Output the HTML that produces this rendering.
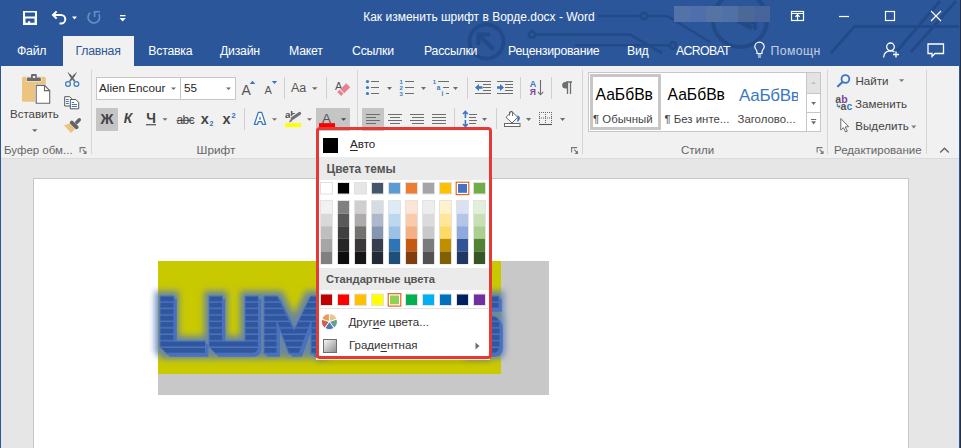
<!DOCTYPE html>
<html><head><meta charset="utf-8">
<style>
*{margin:0;padding:0;box-sizing:border-box}
html,body{width:961px;height:448px;overflow:hidden;background:#e6e6e6;font-family:"Liberation Sans",sans-serif}
.a{position:absolute}
.t{position:absolute;white-space:nowrap;line-height:1}
#title{left:0;top:0;width:961px;height:66px;background:#2b579a}
.tab{position:absolute;top:44.6px;font-size:12.3px;letter-spacing:-0.25px;color:#fff;white-space:nowrap;line-height:1}
#ribbon{left:0;top:66px;width:961px;height:93px;background:#f1f1f1;border-bottom:1px solid #dadbdc}
.sep{position:absolute;width:1px;background:#d5d5d5}
.glbl{position:absolute;top:145px;font-size:11.5px;color:#666;white-space:nowrap;line-height:1}
.dd{position:absolute;width:0;height:0;border-left:3px solid transparent;border-right:3px solid transparent;border-top:3px solid #666}
</style></head><body>
<!-- title bar -->
<div id="title" class="a"></div>

<div class="t" style="left:363.2px;top:11px;font-size:12px;color:#fff">Как изменить шрифт в Ворде.docx - Word</div>


<!-- title decorations -->
<svg class="a" style="left:0;top:0" width="961" height="66" viewBox="0 0 961 66">
 <g fill="none" stroke="#234a88" stroke-width="2.6">
  <circle cx="486.5" cy="41.5" r="17" stroke-width="3.8"/>
  <path d="M478.5 45 V34.5 H490" stroke-width="4.2"/>
  <path d="M480 36 L493.5 49.5" stroke-width="4.5"/>
  <circle cx="532" cy="34.6" r="3.2"/>
  <path d="M535.2 34.6 H630 L662 53"/>
  <path d="M575 45.3 H669.5"/>
  <circle cx="673" cy="45.3" r="3.2"/>
  <circle cx="644" cy="16" r="3.2"/>
  <path d="M598 16 H640.8 M647.2 16 H667 L710 42"/>
  <circle cx="740" cy="20" r="27" stroke-width="4"/>
  <path d="M715 8 L752 28" stroke-width="5"/>
  <path d="M748 22 H755 V30" stroke-width="4"/>
  <path d="M961 26.5 H854.5 L831 53 M940 1 L897 51 M956 1 L911 52" stroke-width="3"/>
 </g>
</svg>
<svg class="a" style="left:0;top:0" width="961" height="66" viewBox="0 0 961 66"><g fill="none" stroke="#fff" stroke-width="1.2">
  <path d="M757.8 55 H761.2 M758 57 H761"/>
  <path d="M757 53.5 V51.5 C757 50 754.8 48.8 754.8 46.8 A4.7 4.7 0 0 1 764.2 46.8 C764.2 48.8 762 50 762 51.5 V53.5 Z"/>
</g></svg>
<!-- blurred user -->
<div class="a" style="left:674px;top:6px;width:16px;height:16px;background:#5373a8"></div>
<div class="a" style="left:690px;top:6px;width:16px;height:16px;background:#4e6fab"></div>
<div class="a" style="left:706px;top:6px;width:16px;height:16px;background:#5574a4"></div>
<div class="a" style="left:722px;top:6px;width:16px;height:16px;background:#5071a6"></div>
<div class="a" style="left:738px;top:6px;width:16px;height:16px;background:#4b6897"></div>
<div class="a" style="left:754px;top:6px;width:16px;height:16px;background:#48659b"></div>
<!-- QAT icons -->
<svg class="a" style="left:0;top:0" width="140" height="36" viewBox="0 0 140 36">
 <path fill="#fff" fill-rule="evenodd" d="M23 11 H37 V25 H23 Z M25 12.5 V16.5 H35 V12.5 Z M25.5 18.5 V22.8 H28 V21.2 H30.2 V22.8 H34.5 V18.5 Z"/>
 <g fill="none" stroke="#fff" stroke-width="2">
  <path d="M53 15 H61 A4.3 4.3 0 0 1 61 23.6 H59.5"/>
  <path d="M56.6 11.4 L53 15 L56.6 18.6"/>
 </g>
 <path d="M72 16.5 H77 L74.5 19.5 Z" fill="#fff"/>
 <g fill="none" stroke="#6d8dc2" stroke-width="1.6">
  <path d="M90.3 12.6 A5.8 5.8 0 1 0 98.8 14.2"/>
  <path d="M94.6 17 V11.8 H100"/>
 </g>
 <rect x="120" y="15" width="5.5" height="1.3" fill="#fff"/>
 <path d="M119.5 18 H125.8 L122.65 21.5 Z" fill="#fff"/>
</svg>
<!-- window controls -->
<svg class="a" style="left:780px;top:0" width="181" height="66" viewBox="780 0 181 66">
 <g fill="none" stroke="#fff" stroke-width="1.2">
  <rect x="791.5" y="11.5" width="12" height="9"/>
  <path d="M792 13.5 H803 M797.5 14 V20.5 M795.3 16.8 L797.5 14.6 L799.7 16.8"/>
  <path d="M839 16.5 H849"/>
  <rect x="885.5" y="11.5" width="9" height="9"/>
  <path d="M931 11 L941 21 M941 11 L931 21"/>
 </g>
 <g fill="none" stroke="#fff" stroke-width="1.3">
  <circle cx="890.5" cy="46.8" r="3.8"/>
  <path d="M883.5 57.5 C884 52.5 887 50.8 890.5 50.8 C892 50.8 893.5 51.2 894.5 52"/>
  <path d="M896 51.5 V57.5 M893 54.5 H899"/>
  <path d="M928 44 H943.5 V53.5 H935 L932 56.5 V53.5 H928 Z"/>
 </g>
</svg>

<!-- tabs -->
<div class="tab" style="left:17px">Файл</div>
<div class="a" style="left:63px;top:36px;width:71px;height:31px;background:#f1f1f1"></div>
<div class="tab" style="left:75.5px;color:#2b579a">Главная</div>
<div class="tab" style="left:148.3px">Вставка</div>
<div class="tab" style="left:220px">Дизайн</div>
<div class="tab" style="left:289px">Макет</div>
<div class="tab" style="left:352px">Ссылки</div>
<div class="tab" style="left:424px">Рассылки</div>
<div class="tab" style="left:508px">Рецензирование</div>
<div class="tab" style="left:627px">Вид</div>
<div class="tab" style="left:676px;letter-spacing:-0.65px">ACROBAT</div>
<div class="tab" style="left:770.5px;color:#c3cfe4;font-size:12.3px;letter-spacing:0.4px">Помощн</div>

<!-- ribbon -->
<div id="ribbon" class="a"></div>
<div class="glbl" style="left:4px">Буфер обм...</div>
<div class="glbl" style="left:196.6px;top:144.6px;font-size:11.8px">Шрифт</div>
<div class="glbl" style="left:681px">Стили</div>
<div class="glbl" style="left:834px">Редактирование</div>
<div class="sep" style="left:91px;top:70px;height:84px"></div>
<div class="sep" style="left:582px;top:70px;height:84px"></div>
<div class="sep" style="left:827px;top:70px;height:84px"></div>
<div class="sep" style="left:926px;top:70px;height:84px"></div>


<!-- clipboard group -->
<svg class="a" style="left:0;top:66px" width="92" height="92" viewBox="0 66 92 92">
 <rect x="22" y="76.8" width="23.8" height="25" rx="1.5" fill="#ecc47f"/>
 <path d="M26.2 81.5 V78 Q26.2 77 27.2 77 H30.4 V74.6 Q30.4 73.5 31.5 73.5 H36.3 Q37.4 73.5 37.4 74.6 V77 H40.5 Q41.5 77 41.5 78 V81.5 Z" fill="#f2f2f2"/>
 <path d="M26.8 80.9 V78.6 Q26.8 77.6 27.8 77.6 H31 V75.2 Q31 74.1 32.1 74.1 H35.7 Q36.8 74.1 36.8 75.2 V77.6 H39.9 Q40.9 77.6 40.9 78.6 V80.9 Z" fill="#6b6b6b"/>
 <rect x="32.9" y="76" width="2.3" height="2" fill="#f2f2f2"/>
 <path d="M35 84.2 H44.8 L51 90.2 V104.5 H35 Z" fill="#f2f2f2"/>
 <path d="M36.2 85.4 H44.5 L49.7 90.6 V103.3 H36.2 Z" fill="#fff" stroke="#666" stroke-width="1.1"/>
 <path d="M44.5 85.4 V90.6 H49.7" fill="none" stroke="#666" stroke-width="1.1"/>
 <path d="M32 129.2 H37.5 L34.75 132 Z" fill="#6d6d6d"/>
 <!-- scissors -->
 <path d="M67.6 72.5 L71.4 78.5 L73 78.5 L76.9 72.5 L76.2 72.3 L72.2 77.2 L68.3 72.3 Z" fill="#666"/>
 <path d="M69.6 74.5 L74.6 81.2 M74.8 74.5 L69.8 81.2" stroke="#666" stroke-width="1.8"/>
 <g fill="none" stroke="#3d78c3" stroke-width="1.2"><circle cx="68" cy="84" r="2.4"/><circle cx="76.4" cy="84" r="2.4"/></g>
 <!-- copy -->
 <g fill="#fff" stroke="#555" stroke-width="1">
  <path d="M64.7 96.7 H69.7 L71.7 98.7 V106 H64.7 Z"/>
  <path d="M70.3 99.5 H75.8 L78.7 102.4 V108.8 H70.3 Z"/>
 </g>
 <g stroke="#3d78c3" stroke-width="1"><path d="M66 99.5 H68.8 M66 101.5 H68.8 M66 103.5 H68.8 M71.8 102.5 H74.2 M71.8 104.5 H77 M71.8 106.5 H77"/></g>
 <!-- format painter -->
 <path d="M64 125.3 L69.5 123.5 L75 129 L71 133 Z" fill="#ecc47f"/>
 <path d="M71.8 122.6 L76.6 127.2" stroke="#646464" stroke-width="4" stroke-linecap="round"/>
 <path d="M76.8 122.2 L79.3 119.7" stroke="#646464" stroke-width="3.4" stroke-linecap="round"/>
</svg>
<div class="t" style="left:10px;top:109px;font-size:11.5px;color:#444">Вставить</div>


<!-- font group -->
<div class="a" style="left:96px;top:77px;width:85px;height:23px;background:#fff;border:1px solid #c6c6c6"></div>
<div class="a" style="left:180px;top:77px;width:56px;height:23px;background:#fff;border:1px solid #c6c6c6"></div>
<div class="t" style="left:99px;top:81.8px;font-size:11.7px;color:#262626">Alien Encour</div>
<div class="t" style="left:184px;top:81.8px;font-size:11.7px;color:#262626">55</div>
<div class="a" style="left:96px;top:108px;width:22px;height:23px;background:#c5c5c5"></div>
<div class="a" style="left:316px;top:108px;width:34px;height:23px;background:#c5c5c5"></div>
<div class="t" style="left:100.5px;top:111.8px;font-size:14.3px;font-weight:bold;color:#444">Ж</div>
<div class="t" style="left:123.8px;top:111.8px;font-size:13.8px;font-weight:bold;font-style:italic;color:#444">К</div>
<div class="t" style="left:146.2px;top:111.8px;font-size:13.8px;font-weight:bold;color:#444">Ч</div>
<div class="t" style="left:176.5px;top:113.5px;font-size:12px;color:#444;letter-spacing:-0.6px">abc</div>
<div class="t" style="left:200.8px;top:111.5px;font-size:14.5px;font-weight:bold;color:#444">x</div>
<div class="t" style="left:209.5px;top:119.5px;font-size:7px;font-weight:bold;color:#2e6fbd">2</div>
<div class="t" style="left:222.6px;top:111.5px;font-size:14.5px;font-weight:bold;color:#444">x</div>
<div class="t" style="left:231.5px;top:112px;font-size:7.5px;font-weight:bold;color:#2e6fbd">2</div>
<div class="t" style="left:241.5px;top:83px;font-size:14px;color:#555">A</div>
<div class="t" style="left:264.5px;top:85px;font-size:11px;color:#555">A</div>
<div class="t" style="left:291px;top:82px;font-size:12.5px;color:#555">Aa</div>
<div class="t" style="left:335px;top:80.5px;font-size:11px;color:#555">A</div>
<div class="t" style="left:285px;top:109.8px;font-size:9.8px;font-weight:bold;color:#4a4a4a;letter-spacing:-0.3px">ab</div>
<div class="t" style="left:322px;top:112px;font-size:13.5px;color:#555">A</div>
<svg class="a" style="left:92px;top:66px" width="270" height="92" viewBox="92 66 270 92">
 <g fill="#6d6d6d">
  <path d="M171 87.5 H176 L173.5 90 Z"/>
  <path d="M226 87.5 H231 L228.5 90 Z"/>
  <path d="M312 87.2 H317.5 L314.75 90 Z"/>
  <path d="M162.5 118.2 H167.5 L165 120.8 Z"/>
  <path d="M272 118.2 H277 L274.5 120.8 Z"/>
  <path d="M307 118.2 H312 L309.5 120.8 Z"/>
  <path d="M341 118.2 H346.2 L343.6 120.8 Z" fill="#444"/>
 </g>
 <rect x="146" y="124.2" width="10" height="1.1" fill="#444"/>
 <rect x="176.5" y="119.8" width="17" height="1" fill="#444"/>
 <path d="M249.7 84 L252.5 80.7 L255.3 84 Z" fill="#3a78c2"/>
 <path d="M271.8 80.9 H277.2 L274.5 84 Z" fill="#3a78c2"/>
 <g class="sep"></g>
 <rect x="284" y="77" width="1" height="22" fill="#d0d0d0"/>
 <rect x="326" y="77" width="1" height="22" fill="#d0d0d0"/>
 <rect x="244" y="108" width="1" height="22" fill="#d0d0d0"/>
 <!-- eraser -->
 <path d="M340.6 89.2 L346.2 83.3 L350.2 87.3 L344.3 93.2 Z" fill="#e8808f"/>
 <path d="M337.2 92 L339.6 89.7 L343.5 93.6 L341.2 95.9 Z" fill="#e8808f"/>
 <!-- text effects A -->
 <path d="M254.4 124.3 L258.3 112.4 H261.7 L265.6 124.3 H262.5 L261.6 121.6 H258.4 L257.5 124.3 Z" fill="#fff" stroke="#3a78c2" stroke-width="1.3" stroke-linejoin="round"/>
 <path d="M258.9 119.5 H261.1 L260 115.8 Z" fill="#3a78c2"/>
 <!-- highlighter pen -->
 <path d="M292.2 118.6 L299.6 113.4" stroke="#f1f1f1" stroke-width="5" stroke-linecap="round"/>
 <path d="M292.2 118.6 L299.6 113.4" stroke="#707070" stroke-width="3.1" stroke-linecap="round"/>
 <path d="M288.7 122.4 L290.6 119.2 L292.6 121 Z" fill="#707070"/>
 <rect x="285" y="123.1" width="16" height="4" fill="#ffff00"/>
 <rect x="319" y="123.1" width="16" height="4" fill="#ff0000"/>
</svg>
<div class="sep" style="left:357px;top:70px;height:84px"></div>


<!-- paragraph group -->
<div class="a" style="left:362px;top:108px;width:22px;height:23px;background:#c5c5c5"></div>
<svg class="a" style="left:358px;top:66px" width="230" height="92" viewBox="358 66 230 92">
 <g fill="#6d6d6d">
  <path d="M387 87 H392 L389.5 90 Z"/>
  <path d="M421 87 H426 L423.5 90 Z"/>
  <path d="M453 87 H458 L455.5 90 Z"/>
  <path d="M482 118 H487 L484.5 121 Z"/>
  <path d="M526 118 H531.2 L528.6 121 Z"/>
  <path d="M560 118 H565.2 L562.6 121 Z"/>
 </g>
 <g fill="#d0d0d0">
  <rect x="467" y="77" width="1" height="22"/>
  <rect x="520" y="77" width="1" height="22"/>
  <rect x="551" y="77" width="1" height="22"/>
  <rect x="454" y="108" width="1" height="21"/>
  <rect x="496" y="108" width="1" height="21"/>
 </g>
 <!-- bullets -->
 <g fill="#3a78c2"><circle cx="367.5" cy="81.5" r="1.6"/><circle cx="367.5" cy="87.5" r="1.6"/><circle cx="367.5" cy="93.5" r="1.6"/></g>
 <g stroke="#6d6d6d" stroke-width="1.1">
  <path d="M371 81.5 H379 M371 87.5 H379 M371 93.5 H379"/>
  <path d="M405 81.5 H414 M405 87.5 H414 M405 93.5 H414"/>
  <path d="M438 81.5 H449 M443 87.5 H449 M446 93.5 H449"/>
  <path d="M475 81.5 H491 M483 84.5 H491 M483 87.5 H491 M483 90.5 H491 M475 93.5 H491"/>
  <path d="M497 81.5 H513 M505 84.5 H513 M505 87.5 H513 M505 90.5 H513 M497 93.5 H513"/>
  <path d="M366 114.5 H380 M366 117.5 H376 M366 120.5 H380 M366 123.5 H376"/>
  <path d="M388 114.5 H402 M390 117.5 H400 M388 120.5 H402 M390 123.5 H400"/>
  <path d="M410 114.5 H424 M412 117.5 H424 M410 120.5 H424 M412 123.5 H424"/>
  <path d="M432 114.5 H446 M432 117.5 H446 M432 120.5 H446 M432 123.5 H446"/>
  <path d="M469 114.5 H477 M469 117.5 H476 M469 120.5 H477 M469 123.5 H476"/>
 </g>
 <g font-family="Liberation Sans" font-weight="bold" fill="#3a78c2">
  <text x="399.6" y="83.9" font-size="6">1</text>
  <text x="399.6" y="89.9" font-size="6">2</text>
  <text x="399.6" y="95.9" font-size="6">3</text>
  <text x="432.8" y="83.9" font-size="6">1</text>
  <text x="436.8" y="89.6" font-size="6.5">a</text>
  <text x="441.6" y="96" font-size="6.5">i</text>
 </g>
 <!-- indent arrows -->
 <path d="M475 87.5 L479 84 V86.2 H482.5 V88.8 H479 V91 Z" fill="#3a78c2"/>
 <path d="M504 87.5 L500 84 V86.2 H497 V88.8 H500 V91 Z" fill="#3a78c2"/>
 <!-- sort -->
 <text x="529.7" y="86.7" font-family="Liberation Sans" font-weight="bold" font-size="9" fill="#3a78c2">A</text>
 <text x="529.8" y="94.9" font-family="Liberation Sans" font-weight="bold" font-size="8.5" fill="#7b3fa0">Я</text>
 <path d="M540.5 80 V94.5 M537.8 91.8 L540.5 94.8 L543.2 91.8" fill="none" stroke="#6d6d6d" stroke-width="1.1"/>
 <!-- pilcrow -->
 <path d="M566 82 H572 M567.5 82 V94 M570.5 82 V94" stroke="#6d6d6d" stroke-width="1.3" fill="none"/>
 <path d="M567.5 82 H565.5 A3.3 3.3 0 0 0 565.5 88.6 H567.5 Z" fill="#6d6d6d"/>
 <!-- line spacing arrows -->
 <path d="M465.4 112 V118 M463 114 L465.4 111.5 L467.8 114 M465.4 120 V126 M463 124 L465.4 126.5 L467.8 124" fill="none" stroke="#3a78c2" stroke-width="1.6"/>
 <!-- shading -->
 <path d="M506 117.3 L511.8 111.5 L517.8 117.3 L512 123 Z" fill="#fff" stroke="#666" stroke-width="1"/>
 <path d="M509.5 115.5 V112 Q511 110.6 512.6 112 V116" fill="none" stroke="#666" stroke-width="1"/>
 <path d="M517.3 115.2 Q520.5 116.5 519.8 119 Q519 121.5 517 121.8 Q517.8 118.5 517.3 115.2 Z" fill="#3a78c2"/>
 <rect x="504.5" y="123.5" width="15.5" height="3" fill="#fff" stroke="#666" stroke-width="1"/>
 <!-- borders -->
 <g fill="none" stroke="#666" stroke-width="1" stroke-dasharray="1 1">
  <path d="M539 112.5 H552 M539 118 H552 M539.5 112 V123 M545.5 112 V123 M551.5 112 V123"/>
 </g>
 <path d="M539 124.5 H552" stroke="#555" stroke-width="1.1"/>
</svg>


<!-- launchers -->
<svg class="a" style="left:0;top:140px" width="961" height="18" viewBox="0 140 961 18">
 <g id="ln">
 <path d="M571.6 152.6 V147.6 H577" fill="none" stroke="#777" stroke-width="1.1"/>
 <path d="M574.2 149.6 L577.6 153" stroke="#777" stroke-width="1.1"/>
 <path d="M578 150.4 V154 H574.4 Z" fill="#777"/>
 </g>
 <use href="#ln" x="-491.5"/>
 <use href="#ln" x="245.5"/>
</svg>


<!-- styles gallery -->
<div class="a" style="left:588px;top:72px;width:233px;height:60px;background:#fff;border:1px solid #c6c6c6"></div>
<div class="a" style="left:590px;top:74px;width:71px;height:56px;border:3px solid #c6c6c6"></div>
<div class="a" style="left:806px;top:72px;width:15px;height:60px;border:1px solid #c6c6c6;background:#fff"></div>
<div class="a" style="left:807px;top:73px;width:13px;height:20px;background:#e3e3e3"></div>
<div class="a" style="left:806px;top:93px;width:15px;height:1px;background:#c6c6c6"></div>
<div class="a" style="left:806px;top:112px;width:15px;height:1px;background:#c6c6c6"></div>
<div class="t" style="left:595.5px;top:87px;font-size:15.7px;color:#000">АаБбВв</div>
<div class="t" style="left:667.5px;top:87px;font-size:15.7px;color:#000">АаБбВв</div>
<div class="a" style="left:737px;top:80px;width:61px;height:26px;overflow:hidden"><div class="t" style="left:2px;top:7px;font-size:17px;color:#3a78c2;letter-spacing:-0.3px">АаБбВв</div></div>
<div class="t" style="left:593px;top:113.5px;font-size:11.4px;color:#444">¶ Обычный</div>
<div class="t" style="left:664.5px;top:113.5px;font-size:11.4px;color:#444">¶ Без инте...</div>
<div class="t" style="left:737.5px;top:113.5px;font-size:11.4px;color:#444">Заголово...</div>
<svg class="a" style="left:800px;top:66px" width="130" height="92" viewBox="800 66 130 92">
 <path d="M811.2 84 L813.6 81.3 L816 84 Z" fill="#c2c2c2"/>
 <path d="M811.2 102 H816 L813.6 105 Z" fill="#6d6d6d"/>
 <rect x="811" y="119" width="5.2" height="1" fill="#6d6d6d"/>
 <path d="M811.2 121.3 H816 L813.6 124.6 Z" fill="#6d6d6d"/>
 <!-- find -->
 <circle cx="845.4" cy="79" r="3.9" fill="none" stroke="#3a78c2" stroke-width="1.8"/>
 <path d="M842.5 82 L838 86.2" stroke="#3a78c2" stroke-width="2.2" stroke-linecap="round"/>
 <path d="M899 79.3 H904.2 L901.6 82 Z" fill="#7a7a7a"/>
 <path d="M911.2 125.6 H916.3 L913.75 128.5 Z" fill="#7a7a7a"/>
 <!-- replace -->
 <text x="835.3" y="102.8" font-family="Liberation Sans" font-size="10.5" font-weight="bold" fill="#555">a</text>
 <text x="841.2" y="102.8" font-family="Liberation Sans" font-size="10.5" font-weight="bold" fill="#7b3fa0">b</text>
 <text x="840.6" y="110" font-family="Liberation Sans" font-size="10.5" font-weight="bold" fill="#555">a</text>
 <text x="846.4" y="110" font-family="Liberation Sans" font-size="10.5" font-weight="bold" fill="#3a78c2">c</text>
 <path d="M837.3 103.5 V106.5 H840 M838.6 105.2 L840.2 106.5 L838.6 107.8" fill="none" stroke="#3a78c2" stroke-width="1"/>
 <!-- select cursor -->
 <path d="M840.8 118.5 V130 L843.4 127.6 L845.6 132 L847.3 131.2 L845.2 126.9 L848.7 126.7 Z" fill="#fff" stroke="#6d6d6d" stroke-width="1" stroke-linejoin="round"/>
</svg>
<div class="t" style="left:855.5px;top:74.8px;font-size:11.6px;color:#444">Найти</div>
<div class="t" style="left:855px;top:98.2px;font-size:11.6px;color:#444">Заменить</div>
<div class="t" style="left:855.3px;top:120.2px;font-size:11.6px;color:#444">Выделить</div>
<!-- collapse ribbon -->
<svg class="a" style="left:936px;top:144px" width="16" height="12" viewBox="936 144 16 12"><path d="M940.2 152.6 L944.5 148.3 L948.8 152.6" fill="none" stroke="#666" stroke-width="1.4"/></svg>

<!-- page -->
<div class="a" style="left:33px;top:178px;width:876px;height:280px;background:#fff;border:1px solid #c6c6c6"></div>
<div class="a" style="left:158px;top:261px;width:391px;height:134px;background:#c8c8c8"></div>
<div class="a" style="left:158px;top:261px;width:343px;height:113px;background:#c9c900"></div>


<!-- LUMPICS -->
<svg class="a" style="left:140px;top:270px" width="400" height="110" viewBox="140 270 400 110">
 <defs>
  <pattern id="stripes" x="0" y="296.3" width="10" height="6.45" patternUnits="userSpaceOnUse">
   <rect width="10" height="6.45" fill="#30579d"/>
   <rect y="5.05" width="10" height="1.4" fill="#4d75c0"/>
  </pattern>
  <filter id="glow" x="-20%" y="-40%" width="140%" height="180%">
   <feMorphology operator="dilate" radius="4.5" in="SourceAlpha" result="d"/>
   <feGaussianBlur in="d" stdDeviation="3" result="b"/>
   <feFlood flood-color="#5a7bb8" flood-opacity="0.85"/>
   <feComposite in2="b" operator="in"/>
  </filter>
  <g id="lt">
   <path d="M160 296 H174 V341 H205.5 V354 H167 L160 347 Z"/>
   <path d="M209 296 H222.5 V341 H245 V296 H258.5 V346 Q258.5 354 250.5 354 H216 L209 347 Z"/>
   <path d="M264 296 H277.5 L294 330 L310.5 296 H324 V354 H311 V322 L299 354 H289 L277 322 V354 H264 Z"/>
   <path d="M470 296 H499 V309 H486 V316 H491 Q500 316 500 325 V345 Q500 354 491 354 H470 Z"/>
  </g>
 </defs>
 <use href="#lt" filter="url(#glow)"/>
 <use href="#lt" x="2.8" y="2.8" fill="#4a70c0"/>
 <use href="#lt" fill="url(#stripes)" stroke="#4a72c0" stroke-width="1"/>
</svg>

<!-- menu -->
<div class="a" style="left:319px;top:131px;width:170px;height:226px;background:#fff"></div>
<div class="a" style="left:319px;top:157px;width:170px;height:23px;background:#ebebeb"></div>
<div class="a" style="left:319px;top:268px;width:170px;height:22px;background:#ebebeb"></div>
<div class="a" style="left:323px;top:138px;width:14.5px;height:14.5px;background:#000"></div>
<div class="t" style="left:350px;top:137.9px;font-size:11.6px;color:#262626"><u style="text-decoration-thickness:1px;text-underline-offset:2px">А</u>вто</div>
<div class="t" style="left:326.5px;top:163.8px;font-size:11.9px;font-weight:bold;color:#555">Цвета темы</div>
<div class="t" style="left:326px;top:274px;font-size:11.2px;font-weight:bold;color:#555">Стандартные цвета</div>
<svg class="a" style="left:316px;top:127px" width="176" height="233" viewBox="316 127 176 233">
 <rect x="320.5" y="182.5" width="12" height="11.5" fill="#FFFFFF" stroke="#e0e0e0" stroke-width="1"/>
 <rect x="337.5" y="182.5" width="12" height="11.5" fill="#000000" stroke="#e0e0e0" stroke-width="1"/>
 <rect x="354.5" y="182.5" width="12" height="11.5" fill="#E7E6E6" stroke="#e0e0e0" stroke-width="1"/>
 <rect x="371.5" y="182.5" width="12" height="11.5" fill="#44546A" stroke="#e0e0e0" stroke-width="1"/>
 <rect x="388.5" y="182.5" width="12" height="11.5" fill="#5B9BD5" stroke="#e0e0e0" stroke-width="1"/>
 <rect x="405.5" y="182.5" width="12" height="11.5" fill="#ED7D31" stroke="#e0e0e0" stroke-width="1"/>
 <rect x="422.5" y="182.5" width="12" height="11.5" fill="#A5A5A5" stroke="#e0e0e0" stroke-width="1"/>
 <rect x="439.5" y="182.5" width="12" height="11.5" fill="#FFC000" stroke="#e0e0e0" stroke-width="1"/>
 <rect x="456.5" y="182.5" width="12" height="11.5" fill="#4472C4" stroke="#e0e0e0" stroke-width="1"/>
 <rect x="473.5" y="182.5" width="12" height="11.5" fill="#70AD47" stroke="#e0e0e0" stroke-width="1"/>
 <rect x="320.5" y="200.5" width="12" height="63.5" fill="none" stroke="#e3e3e3" stroke-width="1"/>
 <rect x="321.0" y="201.0" width="11" height="12.6" fill="#F2F2F2"/>
 <rect x="321.0" y="213.6" width="11" height="12.6" fill="#D9D9D9"/>
 <rect x="321.0" y="226.2" width="11" height="12.6" fill="#BFBFBF"/>
 <rect x="321.0" y="238.8" width="11" height="12.6" fill="#A6A6A6"/>
 <rect x="321.0" y="251.4" width="11" height="12.6" fill="#808080"/>
 <rect x="337.5" y="200.5" width="12" height="63.5" fill="none" stroke="#e3e3e3" stroke-width="1"/>
 <rect x="338.0" y="201.0" width="11" height="12.6" fill="#808080"/>
 <rect x="338.0" y="213.6" width="11" height="12.6" fill="#595959"/>
 <rect x="338.0" y="226.2" width="11" height="12.6" fill="#404040"/>
 <rect x="338.0" y="238.8" width="11" height="12.6" fill="#262626"/>
 <rect x="338.0" y="251.4" width="11" height="12.6" fill="#0D0D0D"/>
 <rect x="354.5" y="200.5" width="12" height="63.5" fill="none" stroke="#e3e3e3" stroke-width="1"/>
 <rect x="355.0" y="201.0" width="11" height="12.6" fill="#D0CECE"/>
 <rect x="355.0" y="213.6" width="11" height="12.6" fill="#AEABAB"/>
 <rect x="355.0" y="226.2" width="11" height="12.6" fill="#757171"/>
 <rect x="355.0" y="238.8" width="11" height="12.6" fill="#3A3838"/>
 <rect x="355.0" y="251.4" width="11" height="12.6" fill="#171616"/>
 <rect x="371.5" y="200.5" width="12" height="63.5" fill="none" stroke="#e3e3e3" stroke-width="1"/>
 <rect x="372.0" y="201.0" width="11" height="12.6" fill="#D6DCE4"/>
 <rect x="372.0" y="213.6" width="11" height="12.6" fill="#ADB9CA"/>
 <rect x="372.0" y="226.2" width="11" height="12.6" fill="#8496B0"/>
 <rect x="372.0" y="238.8" width="11" height="12.6" fill="#333F4F"/>
 <rect x="372.0" y="251.4" width="11" height="12.6" fill="#222A35"/>
 <rect x="388.5" y="200.5" width="12" height="63.5" fill="none" stroke="#e3e3e3" stroke-width="1"/>
 <rect x="389.0" y="201.0" width="11" height="12.6" fill="#DDEBF7"/>
 <rect x="389.0" y="213.6" width="11" height="12.6" fill="#BDD7EE"/>
 <rect x="389.0" y="226.2" width="11" height="12.6" fill="#9BC2E6"/>
 <rect x="389.0" y="238.8" width="11" height="12.6" fill="#2F75B5"/>
 <rect x="389.0" y="251.4" width="11" height="12.6" fill="#1F4E78"/>
 <rect x="405.5" y="200.5" width="12" height="63.5" fill="none" stroke="#e3e3e3" stroke-width="1"/>
 <rect x="406.0" y="201.0" width="11" height="12.6" fill="#FCE4D6"/>
 <rect x="406.0" y="213.6" width="11" height="12.6" fill="#F8CBAD"/>
 <rect x="406.0" y="226.2" width="11" height="12.6" fill="#F4B084"/>
 <rect x="406.0" y="238.8" width="11" height="12.6" fill="#C65911"/>
 <rect x="406.0" y="251.4" width="11" height="12.6" fill="#833C0C"/>
 <rect x="422.5" y="200.5" width="12" height="63.5" fill="none" stroke="#e3e3e3" stroke-width="1"/>
 <rect x="423.0" y="201.0" width="11" height="12.6" fill="#EDEDED"/>
 <rect x="423.0" y="213.6" width="11" height="12.6" fill="#DBDBDB"/>
 <rect x="423.0" y="226.2" width="11" height="12.6" fill="#C9C9C9"/>
 <rect x="423.0" y="238.8" width="11" height="12.6" fill="#7B7B7B"/>
 <rect x="423.0" y="251.4" width="11" height="12.6" fill="#525252"/>
 <rect x="439.5" y="200.5" width="12" height="63.5" fill="none" stroke="#e3e3e3" stroke-width="1"/>
 <rect x="440.0" y="201.0" width="11" height="12.6" fill="#FFF2CC"/>
 <rect x="440.0" y="213.6" width="11" height="12.6" fill="#FFE699"/>
 <rect x="440.0" y="226.2" width="11" height="12.6" fill="#FFD966"/>
 <rect x="440.0" y="238.8" width="11" height="12.6" fill="#BF8F00"/>
 <rect x="440.0" y="251.4" width="11" height="12.6" fill="#806000"/>
 <rect x="456.5" y="200.5" width="12" height="63.5" fill="none" stroke="#e3e3e3" stroke-width="1"/>
 <rect x="457.0" y="201.0" width="11" height="12.6" fill="#D9E1F2"/>
 <rect x="457.0" y="213.6" width="11" height="12.6" fill="#B4C6E7"/>
 <rect x="457.0" y="226.2" width="11" height="12.6" fill="#8EA9DB"/>
 <rect x="457.0" y="238.8" width="11" height="12.6" fill="#305496"/>
 <rect x="457.0" y="251.4" width="11" height="12.6" fill="#203764"/>
 <rect x="473.5" y="200.5" width="12" height="63.5" fill="none" stroke="#e3e3e3" stroke-width="1"/>
 <rect x="474.0" y="201.0" width="11" height="12.6" fill="#E2EFDA"/>
 <rect x="474.0" y="213.6" width="11" height="12.6" fill="#C6E0B4"/>
 <rect x="474.0" y="226.2" width="11" height="12.6" fill="#A9D08E"/>
 <rect x="474.0" y="238.8" width="11" height="12.6" fill="#548235"/>
 <rect x="474.0" y="251.4" width="11" height="12.6" fill="#375623"/>
 <rect x="320.5" y="294" width="12" height="11.5" fill="#C00000" stroke="#e3e3e3" stroke-width="1"/>
 <rect x="337.5" y="294" width="12" height="11.5" fill="#FF0000" stroke="#e3e3e3" stroke-width="1"/>
 <rect x="354.5" y="294" width="12" height="11.5" fill="#FFC000" stroke="#e3e3e3" stroke-width="1"/>
 <rect x="371.5" y="294" width="12" height="11.5" fill="#FFFF00" stroke="#e3e3e3" stroke-width="1"/>
 <rect x="388.5" y="294" width="12" height="11.5" fill="#92D050" stroke="#e3e3e3" stroke-width="1"/>
 <rect x="405.5" y="294" width="12" height="11.5" fill="#00B050" stroke="#e3e3e3" stroke-width="1"/>
 <rect x="422.5" y="294" width="12" height="11.5" fill="#00B0F0" stroke="#e3e3e3" stroke-width="1"/>
 <rect x="439.5" y="294" width="12" height="11.5" fill="#0070C0" stroke="#e3e3e3" stroke-width="1"/>
 <rect x="456.5" y="294" width="12" height="11.5" fill="#002060" stroke="#e3e3e3" stroke-width="1"/>
 <rect x="473.5" y="294" width="12" height="11.5" fill="#7030A0" stroke="#e3e3e3" stroke-width="1"/>
 <rect x="456.2" y="182.2" width="12.6" height="12.4" fill="#fff" stroke="#e8661e" stroke-width="1.2"/>
 <rect x="458" y="184" width="9" height="8.8" fill="#4472C4"/>
 <rect x="388.2" y="293.7" width="12.6" height="12.4" fill="#fff" stroke="#e8661e" stroke-width="1.2"/>
 <rect x="390" y="295.5" width="9" height="8.8" fill="#92D050"/>
 <rect x="320" y="308" width="168" height="1" fill="#e3e3e3"/>
 <path d="M329.4 321.6 L329.40 313.70 A7.9 7.9 0 0 1 336.91 319.16 Z" fill="#e8c58d" stroke="#fff" stroke-width="0.9"/>
 <path d="M329.4 321.6 L336.91 319.16 A7.9 7.9 0 0 1 334.04 327.99 Z" fill="#63a08c" stroke="#fff" stroke-width="0.9"/>
 <path d="M329.4 321.6 L334.04 327.99 A7.9 7.9 0 0 1 324.76 327.99 Z" fill="#4a7cbd" stroke="#fff" stroke-width="0.9"/>
 <path d="M329.4 321.6 L324.76 327.99 A7.9 7.9 0 0 1 321.89 319.16 Z" fill="#d75c48" stroke="#fff" stroke-width="0.9"/>
 <path d="M329.4 321.6 L321.89 319.16 A7.9 7.9 0 0 1 329.40 313.70 Z" fill="#e59a55" stroke="#fff" stroke-width="0.9"/>
 <defs><linearGradient id="gr" x1="0" y1="0" x2="1" y2="1"><stop offset="0" stop-color="#fafafa"/><stop offset="1" stop-color="#8a8a8a"/></linearGradient></defs>
 <rect x="323.5" y="339.5" width="13" height="13" fill="url(#gr)" stroke="#6d6d6d" stroke-width="1"/>
 <path d="M475.5 342.5 L479.5 346 L475.5 349.5 Z" fill="#6d6d6d"/>
</svg>
<div class="t" style="left:348.5px;top:315.5px;font-size:11.6px;color:#333">Друг<u style="text-decoration-thickness:1px;text-underline-offset:2px">и</u>е цвета...</div>
<div class="t" style="left:349px;top:339.5px;font-size:11.5px;color:#333">Гради<u style="text-decoration-thickness:1px;text-underline-offset:2px">е</u>нтная</div>
<div class="a" style="left:316px;top:358px;width:174px;height:2px;background:#e6e8e8;box-shadow:0 2px 4px rgba(0,0,0,0.25)"></div>
<div class="a" style="left:316px;top:127px;width:176px;height:232px;border:3px solid #e53935;border-radius:4px"></div>
<div class="a" style="left:0;top:0;width:1px;height:448px;background:#2b579a"></div>
<div class="a" style="left:959px;top:0;width:1px;height:448px;background:#2b579a"></div>
<div class="a" style="left:960px;top:0;width:1px;height:448px;background:#263040"></div>
</body></html>
